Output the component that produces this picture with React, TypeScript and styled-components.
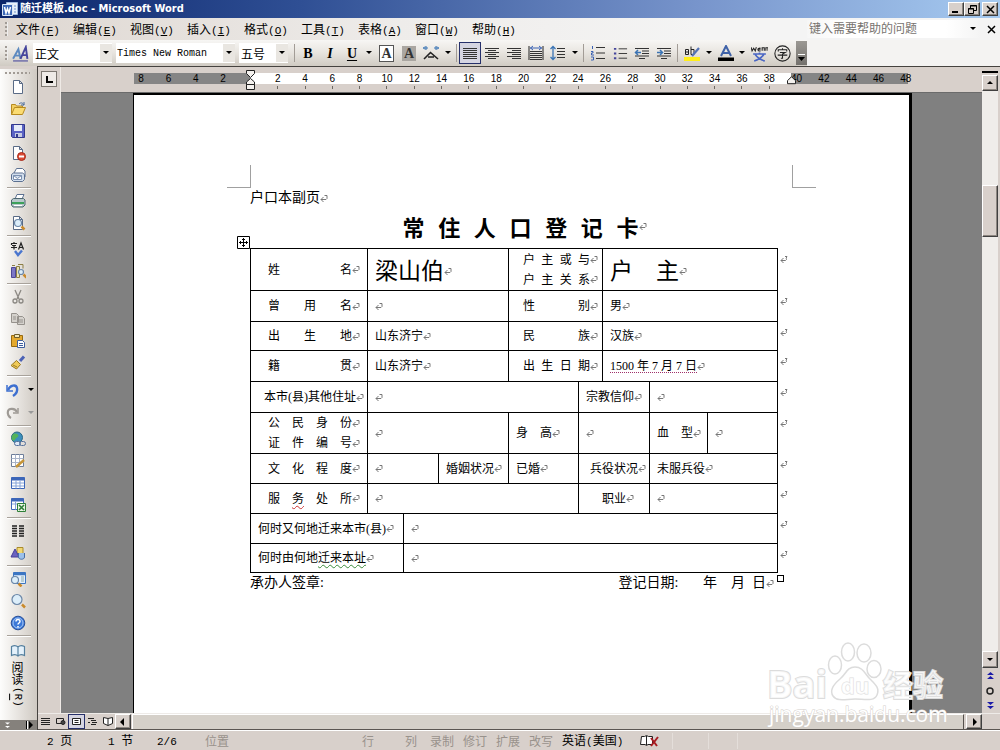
import React from "react";
import styled, { createGlobalStyle, css } from "styled-components";

const cjk = '"Noto Sans CJK SC", sans-serif';
const face = "#d8d0cb";

const GlobalStyle = createGlobalStyle`
  * { box-sizing: border-box; }
  html, body { margin: 0; padding: 0; }
  body { background: ${face}; color: #000; font: 12px/16px "Liberation Sans", ${cjk}; }
  button, select, input { font: inherit; color: inherit; margin: 0; padding: 0; border: 0; background: none; border-radius: 0; }
  svg { display: block; flex: none; }
`;

/* ---------- window frame ---------- */

const Window = styled.div`
  display: flex;
  flex-direction: column;
  height: 100vh;
  overflow: hidden;
  position: relative;
`;

const TitleBar = styled.header`
  display: flex;
  align-items: center;
  height: 18px;
  padding: 0 2px;
  gap: 2px;
  color: #fff;
  background: linear-gradient(to right, #0a246a, #2f4f94 30%, #7895cc 70%, #a6caf0);
`;

const Title = styled.h1`
  flex: 1;
  margin: 0;
  font: bold 11px/16px "DejaVu Sans Condensed", ${cjk};
`;

const Raised = styled.button<{ $w?: number; $h?: number; $flush?: boolean }>`
  display: flex;
  align-items: center;
  justify-content: center;
  flex: none;
  width: ${(p) => p.$w ?? 16}px;
  height: ${(p) => p.$h ?? 14}px;
  margin-right: ${(p) => (p.$flush ? -2 : 0)}px;
  color: #000;
  background: ${face};
  border: 1px solid;
  border-color: #fff #404040 #404040 #fff;
  box-shadow: inset -1px -1px 0 #8c8680;
`;

const MenuBar = styled.nav`
  display: flex;
  align-items: center;
  height: 22px;
  padding: 0 4px 0 5px;
  background: linear-gradient(to right, #ded7d1, #eeecea 40%, #f4f4f4 70%);
`;

const Grip = styled.span`
  width: 3px;
  height: 14px;
  flex: none;
  background: repeating-linear-gradient(to bottom, #a19b95 0 2px, transparent 2px 4px);
  border-right: 1px solid #eee;
`;

const MenuItem = styled.button`
  width: 57px;
  text-align: left;
  white-space: nowrap;
  font-family: ${cjk};
`;

const Menus = styled.div`
  display: flex;
  flex: 1;
  padding-left: 8px;
`;

const Half = styled.span`
  font: 11px/14px "Liberation Mono", monospace;
  u { text-underline-offset: 1px; }
`;

const HelpBox = styled.label`
  display: flex;
  align-items: center;
  width: 174px;
  height: 18px;
  padding-right: 2px;
  background: linear-gradient(to right, #f6f6f6, #fff 20%, #fff 80%, #f4f4f4);
  input { width: 162px; padding-left: 2px; outline: 0; }
  input::placeholder { color: #77736f; opacity: 1; }
`;

const CloseDoc = styled.button`
  width: 15px;
  display: flex;
  justify-content: flex-end;
`;

/* ---------- formatting toolbar ---------- */

const ToolRow = styled.div`
  display: flex;
  height: 26px;
  background: #f4f3f2;
`;

const Toolbar = styled.div`
  display: flex;
  align-items: center;
  padding-left: 5px;
  background: linear-gradient(to bottom, #f7f6f4, #e9e6e1 45%, #d0cbc3);
`;

const Combo = styled.label<{ $w: number; $mono?: boolean }>`
  display: flex;
  align-items: center;
  width: ${(p) => p.$w}px;
  height: 20px;
  margin-right: 4px;
  background: #fff;
  select {
    flex: 1;
    min-width: 0;
    padding-left: ${(p) => (p.$mono ? 1 : 2)}px;
    appearance: none;
    outline: 0;
    font: ${(p) => (p.$mono ? '10px "Liberation Mono", monospace' : "12px " + cjk)};
  }
`;

const ComboArrow = styled.span`
  display: flex;
  align-items: center;
  justify-content: center;
  width: 12px;
  height: 18px;
  background: #e9e6e1;
`;

const Tool = styled.button<{ $w?: number; $active?: boolean }>`
  display: flex;
  align-items: center;
  justify-content: center;
  width: ${(p) => p.$w ?? 22}px;
  height: 22px;
  ${(p) => p.$active && css`border: 1px solid #26306b; background: #d5d5e2;`}
`;

const VRule = styled.span`
  width: 1px;
  height: 18px;
  margin: 0 2px;
  background: #a29c96;
`;

const Letter = styled.span<{ $kind: "b" | "i" | "u" | "box" | "shade" }>`
  font: bold 14px/15px "Liberation Serif", serif;
  ${(p) => p.$kind === "i" && css`font-style: italic;`}
  ${(p) => p.$kind === "u" && css`text-decoration: underline; text-underline-offset: 2px;`}
  ${(p) => p.$kind === "box" && css`width: 15px; text-align: center; color: #333; border: 1px solid #555; background: #fff;`}
  ${(p) => p.$kind === "shade" && css`width: 14px; text-align: center; color: #333; background: #aaa6a1;`}
`;

const EndCap = styled.button`
  display: flex;
  align-items: flex-end;
  justify-content: center;
  width: 11px;
  height: 24px;
  margin-left: 3px;
  padding-bottom: 3px;
  background: linear-gradient(to bottom, #9b9893, #74716d);
`;

/* ---------- work area ---------- */

const Work = styled.div`
  display: flex;
  flex: 1;
  min-height: 0;
`;

const SideBar = styled.aside`
  display: flex;
  flex-direction: column;
  width: 37px;
  flex: none;
  margin-top: 3px;
  background: linear-gradient(to right, #fdfdfc, #f0eeeb 30%, #cfc9c2);
`;

const SideGrip = styled.span`
  height: 2px;
  margin: 3px 7px 2px 5px;
  background: repeating-linear-gradient(to right, #a19b95 0 2px, transparent 2px 4px);
`;

const SideTool = styled.button<{ $h?: number; $menu?: boolean }>`
  display: flex;
  align-items: center;
  gap: 6px;
  height: ${(p) => p.$h ?? 22}px;
  padding-left: ${(p) => (p.$menu ? 5 : 10)}px;
  flex: none;
`;

const HRule = styled.span`
  height: 2px;
  margin: 1px 6px 1px 7px;
  flex: none;
  background: #a8a29b;
  border-bottom: 1px solid #fff;
`;

const ReadTool = styled.button`
  display: flex;
  flex-direction: column;
  align-items: center;
  gap: 2px;
  padding: 5px 2px 0 0;
  line-height: 12px;
  font-family: ${cjk};
`;

const Upright = styled.span`
  writing-mode: vertical-rl;
  text-orientation: mixed;
  line-height: 14px;
`;

const SideCap = styled.button`
  display: flex;
  align-items: center;
  justify-content: space-between;
  height: 10px;
  margin-top: auto;
  padding: 0 3px 0 5px;
  background: #85817c;
`;

const Editor = styled.main`
  display: flex;
  flex-direction: column;
  flex: 1;
  min-width: 0;
  border-top: 1px solid #45423f;
  border-left: 1px solid #45423f;
  background: ${face};
`;

const EditorTop = styled.div`
  display: flex;
  flex: 1;
  min-height: 0;
`;

const LeftGutter = styled.div`
  width: 23px;
  flex: none;
  padding: 4px 0 0 3px;
  border-right: 1px solid #efeae6;
`;

const TabStop = styled.button`
  display: flex;
  align-items: center;
  justify-content: center;
  width: 16px;
  height: 16px;
  border: 1px solid #7d7872;
  background: #eeeae6;
`;

const Canvas = styled.div`
  display: flex;
  flex-direction: column;
  flex: 1;
  min-width: 0;
`;

const RulerRow = styled.div`
  display: flex;
  justify-content: center;
  height: 25px;
  padding: 6px 0 0 4px;
  overflow: hidden;
`;

const Ruler = styled.div`
  position: relative;
  display: grid;
  grid-template-columns: repeat(29, 1fr);
  flex: none;
  width: 792px;
  height: 11px;
  font: 10px/11px "Liberation Sans", sans-serif;
  background: linear-gradient(to right, transparent 6px, #858585 6px 122px, #fff 122px 663px, #858585 663px 780px, transparent 780px);
`;

const RulerMark = styled.span<{ $tick: boolean }>`
  display: flex;
  flex-direction: column;
  align-items: center;
  &::after {
    content: "";
    width: 1px;
    height: 3px;
    margin-top: 2px;
    flex: none;
    background: ${(p) => (p.$tick ? "#6d6862" : "transparent")};
  }
`;

const Indent = styled.svg<{ $x: number; $y: number }>`
  position: absolute;
  left: ${(p) => p.$x}px;
  top: ${(p) => p.$y}px;
`;

const Desk = styled.div`
  flex: 1;
  min-height: 0;
  padding-left: 2px;
  overflow: hidden;
  background: #808080;
  border-top: 1px solid #6b6b6b;
`;

const Paper = styled.article`
  width: 779px;
  min-height: 100%;
  margin: 0 auto;
  padding: 70px 116px 120px 116px;
  background: #fff;
  border: solid #000;
  border-width: 2px 3px 0 1px;
  font: 14px/20px "Liberation Serif", ${cjk};
`;

const Corners = styled.div`
  display: flex;
  justify-content: space-between;
  height: 23px;
  margin: 0 -23px;
`;

const Corner = styled.span<{ $side: "left" | "right" }>`
  width: 24px;
  border-bottom: 1px solid #a0a0a0;
  border-${(p) => (p.$side === "left" ? "right" : "left")}: 1px solid #a0a0a0;
`;

const Line = styled.p`
  display: flex;
  align-items: center;
  margin: 0;
`;

const Heading = styled.h2`
  display: flex;
  align-items: center;
  justify-content: center;
  height: 40px;
  margin: 0;
  padding: 0 0 4px 6px;
  font: bold 22px/30px ${cjk};
`;

const Spread = styled.span<{ $w: number }>`
  display: inline-block;
  width: ${(p) => p.$w}px;
  text-align: justify;
  text-align-last: justify;
`;

const SpreadParts = styled.span`
  display: flex;
  justify-content: space-between;
`;

const TableWrap = styled.div`
  position: relative;
`;

const Handle = styled.svg`
  position: absolute;
  left: -13px;
  top: -12px;
`;

const Resize = styled.span`
  position: absolute;
  left: 527px;
  bottom: -9px;
  width: 7px;
  height: 7px;
  border: 1px solid #000;
`;

const Card = styled.table`
  width: 540px;
  table-layout: fixed;
  border-collapse: collapse;
  font-size: 12px;
  line-height: 20px;
`;

const Row = styled.tr<{ $h: number }>`
  height: ${(p) => p.$h}px;
`;

const Cell = styled.td<{ $pad?: number; $big?: boolean }>`
  padding: 0 0 0 ${(p) => p.$pad ?? 7}px;
  border: 1px solid #000;
  white-space: nowrap;
  vertical-align: middle;
  ${(p) => p.$big && css`padding-top: 4px; font-size: 23px; line-height: 30px;`}
`;

const EndCell = styled.td`
  padding: 6px 0 0 2px;
  border: 0;
  vertical-align: top;
`;

const Para = styled.span`
  display: flex;
  align-items: center;
`;

const Flag = styled.span<{ $kind: "spell" | "grammar" | "tag" }>`
  text-decoration: underline;
  text-underline-offset: 2px;
  text-decoration-thickness: 1px;
  text-decoration-style: ${(p) => (p.$kind === "tag" ? "dotted" : "wavy")};
  text-decoration-color: ${(p) => ({ spell: "#c33", grammar: "#3a8a3a", tag: "#a0306a" })[p.$kind]};
`;

const Sign = styled.div`
  display: flex;
  justify-content: space-between;
  width: 524px;
`;

const DateParts = styled.span`
  display: flex;
  align-items: center;
  white-space: pre;
`;

/* ---------- scroll bars and status ---------- */

const VScroll = styled.div`
  display: flex;
  flex-direction: column;
  align-items: center;
  width: 18px;
  flex: none;
  padding: 4px 2px 0 0;
`;

const Splitter = styled.span`
  width: 16px;
  height: 3px;
  margin-bottom: 1px;
  border-top: 2px solid #000;
`;

const VTrack = styled.div`
  flex: 1;
  width: 16px;
  padding-top: 94px;
  background: #efedea;
`;

const VThumb = styled.div`
  height: 52px;
  background: ${face};
  border: 1px solid;
  border-color: #fff #404040 #404040 #fff;
  box-shadow: inset -1px -1px 0 #8c8680;
`;

const Browse = styled.button`
  display: flex;
  align-items: center;
  justify-content: center;
  width: 16px;
  height: 15px;
`;

const BottomRow = styled.div`
  display: flex;
  align-items: center;
  height: 17px;
  padding-right: 18px;
  border-bottom: 1px solid #5b5652;
  border-top: 1px solid #eeebe8;
`;

const View = styled.button<{ $active?: boolean }>`
  display: flex;
  align-items: center;
  justify-content: center;
  width: ${(p) => (p.$active ? 17 : 15)}px;
  height: 15px;
  ${(p) => p.$active && css`border: 1px solid #26306b; background: #d5d5e2;`}
`;

const HThumb = styled.div`
  flex: 1;
  height: 15px;
  margin: 0 2px 0 1px;
  background: #d5d0c9;
  border-left: 1px solid #fff;
  border-top: 1px solid #fff;
  border-right: 1px solid #55504c;
`;

const Status = styled.footer`
  display: flex;
  align-items: center;
  height: 20px;
  border-top: 1px solid #fff;
  white-space: nowrap;
  font-family: ${cjk};
`;

const Field = styled.span<{ $w: number; $off?: boolean; $boxed?: boolean }>`
  width: ${(p) => p.$w}px;
  flex: none;
  color: ${(p) => (p.$off ? "#98928c" : "#000")};
  ${(p) => p.$boxed && css`height: 16px; border-left: 1px solid #e4deda;`}
`;

const Digits = styled.span`
  font: 11px/16px "Liberation Mono", monospace;
`;

/* ---------- watermark ---------- */

const Watermark = styled.div`
  position: absolute;
  right: 52px;
  bottom: 19px;
  width: 181px;
  height: 90px;
  pointer-events: none;
`;

const MarkText = styled.text<{ $size: number; $thin?: boolean }>`
  font: bold ${(p) => p.$size}px "Open Sans", ${cjk};
  fill: rgba(255, 255, 255, 0.75);
  stroke: #dcdcdc;
  stroke-width: ${(p) => (p.$thin ? 1 : 2)}px;
  paint-order: stroke;
`;

const Address = styled.text`
  font: 21px "Open Sans", sans-serif;
  fill: #fff;
  stroke: #d4cfcb;
  stroke-width: 1px;
  paint-order: stroke;
`;

/* ---------- drawings ---------- */

const Arrow = ({ dir = "down", color = "#000" }: { dir?: "down" | "up" | "left" | "right"; color?: string }) => {
  const d = { down: "M1 2h6L4 5z", up: "M1 5h6L4 2z", left: "M5 0v8L1 4z", right: "M3 0v8l4-4z" }[dir];
  return <svg width="8" height="8" viewBox="0 0 8 8" aria-hidden="true"><path d={d} fill={color} /></svg>;
};

const Mark = ({ end = false }: { end?: boolean }) => (
  <svg width="8" height="9" viewBox="0 0 8 9" fill="none" stroke="#777" strokeWidth="1" aria-hidden="true">
    <path d={end ? "M5 1.5h2L6 3.5M6.5 3.5v1l-1 1H1M3.5 3L1 5.5 3.5 8" : "M4.500 1.500h2.500v3l-1 1H1M3.500 3L1 5.500 3.500 8"} />
  </svg>
);

const Pic = ({ children, size = 16 }: { children: React.ReactNode; size?: number }) => (
  <svg width={size} height={size} viewBox="0 0 16 16" fill="none" aria-hidden="true">{children}</svg>
);

const pageShape = <path d="M3.5 1.500h6l3 3v10h-9z M9.500 1.500v3h3" fill="#fff" stroke="#596b86" />;
const lens = (x: number, y: number, r: number) => (
  <>
    <path d={`M${x + r} ${y + r}l3 3`} stroke="#c98a2c" strokeWidth="2.500" />
    <circle cx={x} cy={y} r={r} fill="#dceefa" stroke="#6b87a8" strokeWidth="1.200" />
  </>
);

const icons: Record<string, React.ReactNode> = {
  new: pageShape,
  open: <><path d="M1.500 13.500v-10h4l1 1.500h6v2" fill="#f3cf62" stroke="#b68a20" /><path d="M1.500 13.500l3-7h11l-3 7z" fill="#fbdc72" stroke="#b68a20" /><path d="M9 3c2-2 4-1 5 1m0-3v3h-3" stroke="#476a9a" /></>,
  save: <><path d="M1.500 1.500h13v13h-12l-1-1z" fill="#5a62c4" stroke="#33398c" /><path d="M4 2h8v6H4z" fill="#e6ecf8" /><path d="M5 10h7v4H5z" fill="#c6cbe2" /><path d="M6 11h2v3H6z" fill="#33398c" /></>,
  permission: <>{pageShape}<circle cx="11.500" cy="11.500" r="4" fill="#dc4b35" stroke="#a52a1a" /><path d="M9 11.500h5" stroke="#fff" strokeWidth="2" /></>,
  mail: <><path d="M4 6l2.500-4.500h6L15 4v6" fill="#fff" stroke="#5c7191" /><path d="M1.500 7.500l2-1.500h9l2 1.500v5l-2 2h-9l-2-2z" fill="#d3dfee" stroke="#5c7191" /><path d="M3.500 8.500h8v4h-8zM3.500 8.500l4 3 4-3" fill="#fff" stroke="#7b90b0" /></>,
  print: <><path d="M5 6l2-4.500h7L12 6z" fill="#fff" stroke="#5c7191" /><path d="M1.500 7l2-1.500h10l1.500 1.500v5l-2 2h-10l-1.500-2z" fill="#b8c8cc" stroke="#4d6670" /><path d="M2 10h12" stroke="#3ca05a" strokeWidth="2" /><path d="M4 12.500h8" stroke="#fff" /></>,
  preview: <>{pageShape}{lens(8, 8, 3.5)}</>,
  spell: <><path d="M1 2.500h6M4 1v1.500M1.500 4v-1.500M2 4.500h4M4 4.500v4M1 6.500h6M8.500 8.500L11 2l2.500 6.500M9 6.500h4.500" stroke="#222" strokeWidth="1.200" /><path d="M5 10l3 4 4-4.500" stroke="#4a76cf" strokeWidth="2.400" /></>,
  research: <><path d="M1.500 4.500h4v10h-4z" fill="#7c77c6" stroke="#4d4896" /><path d="M6.500 3.500h3v11h-3z" fill="#e9e2b8" stroke="#8c7f45" /><path d="M2 2.500h3M8 1.500h5v4" stroke="#8c7f45" />{lens(11, 9, 2.5)}</>,
  cut: <><path d="M5 1l4 9M11 1L7 10" stroke="#8b8883" strokeWidth="1.300" /><circle cx="5" cy="12" r="2" stroke="#8b8883" strokeWidth="1.300" /><circle cx="11" cy="12" r="2" stroke="#8b8883" strokeWidth="1.300" /></>,
  copy: <><path d="M1.500 2.500h5l2 2v7h-7z M7.500 5.500h5l2 2v6h-7z" fill="#d4d1cc" stroke="#96928d" /><path d="M3 6h3M3 8h3M9 9h4M9 11h4" stroke="#96928d" /></>,
  paste: <><path d="M1.500 2.500h11v11h-11z" fill="#e4a92e" stroke="#976a12" /><path d="M4.500 1.500h5v3h-5z" fill="#f4e7b5" stroke="#6d5c2b" /><path d="M7.500 7.500h5l2 2v5h-7z" fill="#fff" stroke="#3f5f9e" /><path d="M9 10.500h4M9 12.500h4" stroke="#3f5f9e" /></>,
  brush: <><path d="M10 6l4-4.500" stroke="#4c62b5" strokeWidth="3" /><path d="M6.500 5.500l4 4-4 4.500-5.500-3.500z" fill="#f0cb58" stroke="#9b7a22" /><path d="M3 10l4 2" stroke="#9b7a22" /></>,
  undo: <><path d="M2 3v6h6" stroke="#3d6fd0" strokeWidth="1.500" /><path d="M3 8c2-5 8-6 9-2s-1 6-4 8" stroke="#3d6fd0" strokeWidth="2.400" /></>,
  redo: <><path d="M13 3v5H8" stroke="#9e9a95" strokeWidth="1.500" /><path d="M12 7c-2-4-8-4-9-1s1 6 3 7" stroke="#9e9a95" strokeWidth="2.200" /></>,
  link: <><circle cx="7" cy="6.500" r="5.500" fill="#3d8fbd" stroke="#2a6684" /><path d="M4 2.500c4 0 6 2 3 4s-2 4-4 3-2-5 1-7z" fill="#53b35b" /><rect x="4.500" y="10.500" width="6" height="4" rx="2" fill="#dfe8f5" stroke="#54709c" /><rect x="9.500" y="10.500" width="6" height="4" rx="2" stroke="#54709c" /></>,
  borders: <><path d="M1.500 1.500h12v12h-12z" fill="#fff" stroke="#6d7d99" /><path d="M1.500 5.500h12M1.500 9.500h12M5.500 1.500v12M9.500 1.500v12" stroke="#a9b4c9" /><path d="M6 14l8-7" stroke="#c69538" strokeWidth="2.500" /></>,
  table: <><path d="M1.500 2.500h13v11h-13z" fill="#fff" stroke="#3c66b8" /><path d="M1.500 4h13" stroke="#3c66b8" strokeWidth="3" /><path d="M2 8h12M2 11h12M6 5.500v8M10 5.500v8" stroke="#86a4d8" /></>,
  excel: <><path d="M1.500 1.500h12v11h-12z" fill="#fff" stroke="#3c66b8" /><path d="M1.500 3h12" stroke="#3c66b8" strokeWidth="3" /><path d="M2 7h6M5.500 4.500v8" stroke="#86a4d8" /><path d="M7.500 6.500h8v8h-8z" fill="#e9f5e4" stroke="#2f7f38" /><path d="M9 8l5 5M14 8l-5 5" stroke="#2f7f38" strokeWidth="1.600" /></>,
  columns: <path d="M2 3h5M2 5.500h5M2 8h5M2 10.500h5M2 13h5M9 3h5M9 5.500h5M9 8h5M9 10.500h5M9 13h5" stroke="#222" strokeWidth="1.400" />,
  drawing: <><path d="M7 2.500h6v6H7z" fill="#f2d873" stroke="#a98b2c" /><path d="M1 12L5 4l4 8z" fill="#6a63c0" stroke="#463f98" /><path d="M8.500 8v4c0 3 6 3 6 0V8" fill="#9cc0ea" stroke="#466da6" /></>,
  map: <><path d="M3.500 1.500h12v11h-12z" fill="#e3effc" stroke="#3c76c2" /><path d="M3.500 3h12" stroke="#3c76c2" strokeWidth="2.500" /><path d="M11 6h3M11 8h3M11 10h3" stroke="#8aa" />{lens(5, 9, 3.5)}</>,
  zoom: lens(7, 6.5, 5),
  help: <><circle cx="8" cy="8" r="6.800" fill="#3b78d8" stroke="#2a4f96" /><circle cx="8" cy="8" r="5" stroke="#a9c9f5" /><path d="M6 6.500c0-3 4.200-2.500 4 0C10 8 8 8 8 9.500M8 11v1.500" stroke="#fff" strokeWidth="1.500" /></>,
  read: <path d="M1.500 3.500c2-1 5-1 6.500.5 1.500-1.500 4.500-1.500 6.500-.5v9c-2-1-5-1-6.500.5-1.500-1.500-4.500-1.500-6.500-.5zM8 4v9" fill="#e4f1fb" stroke="#55809f" strokeWidth="1.200" />,
  style: <><path d="M1 13L6 4l2 9M3 10h4.500" stroke="#5d8ac0" strokeWidth="1.800" /><path d="M8 13L13 2l1.500 11M9.500 9.500h5" stroke="#45459c" strokeWidth="1.800" /><path d="M1 15h14" stroke="#45459c" /></>,
  scale: <><path d="M1 14L7.500 7.500 15 14M5 12h6" stroke="#222" strokeWidth="1.600" /><path d="M0 3h5M3 1v4M2 1.500L.5 3 2 4.500M16 3h-5M13 1v4M14 1.500L15.500 3 14 4.500" stroke="#3b74b4" /></>,
  justify: <path d="M1 3.500h14M1 5.500h14M1 7.500h14M1 9.500h14M1 11.500h14M1 13.500h14" stroke="#333" />,
  center: <path d="M1 3.500h14M4 5.500h8M1 7.500h14M4 9.500h8M1 11.500h14M4 13.500h8" stroke="#333" />,
  right: <path d="M1 3.500h14M6 5.500h9M1 7.500h14M6 9.500h9M1 11.500h14M6 13.500h9" stroke="#333" />,
  distribute: <><path d="M1 1v14M15 1v14" stroke="#222" /><path d="M2 3h12M5 1L2.500 3 5 5M11 1l2.500 2L11 5" stroke="#3b62b4" /><path d="M2 6.500h12M2 8.500h12M2 10.500h12M2 12.500h12M2 14.500h12" stroke="#333" /></>,
  spacing: <><path d="M3 1.500v13M.5 4L3 1.500 5.500 4M.5 12L3 14.500 5.500 12" stroke="#3b74b4" strokeWidth="1.300" /><path d="M7 3.500h8M7 6.500h8M7 9.500h8M7 12.500h8" stroke="#333" /></>,
  numbers: <><path d="M2.500 1v3M1 6.500h2v1.500H1.500V10H4M1 12h2.500v3H1" stroke="#3b62b4" /><path d="M6 2.500h9M6 8h9M6 13.500h9" stroke="#333" /></>,
  bullets: <><path d="M1 2h2.500v2H1zM1 7h2.500v2H1zM1 12h2.500v2H1z" fill="#45459c" /><path d="M6 3h9M6 8h9M6 13h9" stroke="#333" /></>,
  outdent: <><path d="M1 3.500h14M8 6h7M8 8.500h7M1 11h14M5 13.500h6" stroke="#333" strokeWidth="1.200" /><path d="M7 7.500H1.500M4 5L1.500 7.500 4 10" stroke="#3b74b4" strokeWidth="1.500" /></>,
  indent: <><path d="M1 3.500h14M8 6h7M8 8.500h7M1 11h14M5 13.500h6" stroke="#333" strokeWidth="1.200" /><path d="M1 7.500h5.500M4 5l2.500 2.500L4 10" stroke="#3b74b4" strokeWidth="1.500" /></>,
  highlight: <><path d="M0 12h16v4H0z" fill="#ffee1a" /><path d="M1.500 4.500h3v5h-3zM4.500 7H2M7 1.500v8h3v-5H7" stroke="#222" /><path d="M8 11l7-8" stroke="#5674b4" strokeWidth="2.200" /></>,
  color: <><path d="M3 11L8 1l5 10M5 8h6" stroke="#3f62a8" strokeWidth="2" /><path d="M0 12.500h16V16H0z" fill="#000" /></>,
  phonetic: <><path d="M0 2l1 3.500L2.500 3 4 5.500 5 2M6 4h3M9 5.500c-3 1-3.500-3 0-2.500M10.500 5.500v-3h2v3M14 5.500v-3h2v3" stroke="#222" /><path d="M2 8.500h12M8 7v1.500M4 9c2 3 5 5 9 6M12 9c-2 3-5 5-9 6" stroke="#4a66c4" strokeWidth="1.500" /></>,
};

const Icon = ({ name, size }: { name: string; size?: number }) => <Pic size={size}>{icons[name]}</Pic>;

/* ---------- data ---------- */

const menus = [["文件", "F"], ["编辑", "E"], ["视图", "V"], ["插入", "I"], ["格式", "O"], ["工具", "T"], ["表格", "A"], ["窗口", "W"], ["帮助", "H"]];

const sideGroups = [
  ["new", "open", "save", "permission", "mail"],
  ["print", "preview"],
  ["spell", "research"],
  ["cut", "copy", "paste", "brush"],
  ["undo", "redo"],
  ["link", "borders", "table", "excel"],
  ["columns", "drawing"],
  ["map", "zoom", "help"],
];

const rulerValues = Array.from({ length: 29 }, (_, i) => i * 2 - 8);
const columnWidths = [117, 36, 35, 70, 70, 24, 47, 58, 70, 13];

type CellData = { span?: number; pad?: number; spread?: number; big?: boolean; lines: React.ReactNode[] };

const cell = (span: number, text: React.ReactNode = "", pad?: number, big?: boolean): CellData => ({ span, pad, big, lines: [text] });
const label = (...lines: React.ReactNode[]): CellData => ({ pad: 17, spread: 84, lines });
const label2 = (...lines: React.ReactNode[]): CellData => ({ span: 2, pad: 14, spread: 67, lines });

const rows: { h: number; cells: CellData[] }[] = [
  { h: 42, cells: [label("姓名"), cell(3, "梁山伯", 7, true), label2("户主或与", "户主关系"), cell(3, "户　主", 7, true)] },
  { h: 31, cells: [label("曾用名"), cell(3), label2("性别"), cell(3, "男")] },
  { h: 29, cells: [label("出生地"), cell(3, "山东济宁"), label2("民族"), cell(3, "汉族")] },
  { h: 31, cells: [label("籍贯"), cell(3, "山东济宁"), label2("出生日期"), cell(3, <Flag $kind="tag">1500 年 7 月 7 日</Flag>)] },
  { h: 31, cells: [cell(1, "本市(县)其他住址", 13), cell(4), cell(2, "宗教信仰"), cell(2)] },
  { h: 41, cells: [label("公民身份", "证件编号"), cell(3), cell(1, "身　高"), cell(2), cell(1, "血　型"), cell(1)] },
  { h: 30, cells: [label("文化程度"), cell(2), cell(1, "婚姻状况"), cell(1, "已婚"), cell(2, "兵役状况", 11), cell(2, "未服兵役")] },
  { h: 30, cells: [label(<SpreadParts><span>服</span><Flag $kind="spell">务</Flag><span>处</span><span>所</span></SpreadParts>), cell(4), cell(2, "职业", 23), cell(2)] },
  { h: 30, cells: [cell(2, "何时又何地迁来本市(县)"), cell(7)] },
  { h: 29, cells: [cell(2, <>何时由何地<Flag $kind="grammar">迁来本址</Flag></>), cell(7)] },
];

/* ---------- sections ---------- */

const SideTools = () => (
  <SideBar>
    <SideGrip />
    {sideGroups.map((group, i) => (
      <React.Fragment key={i}>
        {group.map((name) => {
          const history = name === "undo" || name === "redo";
          return (
            <SideTool key={name} aria-label={name} $menu={history} $h={history ? 23 : 22}>
              <Icon name={name} />
              {history && <Arrow color={name === "undo" ? "#000" : "#999"} />}
            </SideTool>
          );
        })}
        <HRule />
      </React.Fragment>
    ))}
    <ReadTool>
      <Icon name="read" />
      <span>阅<br />读</span>
      <Upright><Half>(<u>R</u>)</Half></Upright>
    </ReadTool>
    <SideCap aria-label="toolbar options">
      <svg width="5" height="8" viewBox="0 0 5 8"><path d="M0 1.500h5L2.500 3.500zM0 5h5L2.500 7z" fill="#fff" /></svg>
      <svg width="9" height="8" viewBox="0 0 9 8"><path d="M1 0h1v8H1zM4 0v8l4-4z" fill="#000" /><path d="M2 0h1v8H2z" fill="#fff" /></svg>
    </SideCap>
  </SideBar>
);

const FormatBar = () => (
  <ToolRow>
    <Toolbar>
      <Grip />
      <Tool aria-label="样式" $w={25}><Icon name="style" size={17} /></Tool>
      <Combo $w={79}><select aria-label="样式"><option>正文</option></select><ComboArrow><Arrow /></ComboArrow></Combo>
      <Combo $w={119} $mono><select aria-label="字体"><option>Times New Roman</option></select><ComboArrow><Arrow /></ComboArrow></Combo>
      <Combo $w={49}><select aria-label="字号"><option>五号</option></select><ComboArrow><Arrow /></ComboArrow></Combo>
      <VRule />
      <Tool aria-label="加粗"><Letter $kind="b">B</Letter></Tool>
      <Tool aria-label="倾斜"><Letter $kind="i">I</Letter></Tool>
      <Tool aria-label="下划线"><Letter $kind="u">U</Letter></Tool>
      <Tool aria-label="下划线类型" $w={12}><Arrow /></Tool>
      <Tool aria-label="字符边框" $w={23}><Letter $kind="box">A</Letter></Tool>
      <Tool aria-label="字符底纹"><Letter $kind="shade">A</Letter></Tool>
      <Tool aria-label="字符缩放"><Icon name="scale" /></Tool>
      <Tool aria-label="缩放比例" $w={12}><Arrow /></Tool>
      <VRule />
      <Tool aria-label="两端对齐" $active><Icon name="justify" /></Tool>
      <Tool aria-label="居中"><Icon name="center" /></Tool>
      <Tool aria-label="右对齐"><Icon name="right" /></Tool>
      <Tool aria-label="分散对齐"><Icon name="distribute" /></Tool>
      <Tool aria-label="行距"><Icon name="spacing" /></Tool>
      <Tool aria-label="行距选项" $w={12}><Arrow /></Tool>
      <VRule />
      <Tool aria-label="编号" $w={23}><Icon name="numbers" /></Tool>
      <Tool aria-label="项目符号"><Icon name="bullets" size={15} /></Tool>
      <Tool aria-label="减少缩进量"><Icon name="outdent" /></Tool>
      <Tool aria-label="增加缩进量"><Icon name="indent" /></Tool>
      <VRule />
      <Tool aria-label="突出显示" $w={24}><Icon name="highlight" /></Tool>
      <Tool aria-label="突出显示颜色" $w={10}><Arrow /></Tool>
      <Tool aria-label="字体颜色" $w={23}><Icon name="color" /></Tool>
      <Tool aria-label="更多字体颜色" $w={10}><Arrow /></Tool>
      <Tool aria-label="拼音指南" $w={24}><Icon name="phonetic" size={17} /></Tool>
      <Tool aria-label="带圈字符">
        <Pic size={17}><circle cx="8" cy="8" r="7.200" stroke="#222" /><path d="M4 6V4.500h8V6M8 3v1.500M5.500 7h5L8 8.500v4H6.500M3.500 9.500h9" stroke="#222" /></Pic>
      </Tool>
      <EndCap aria-label="工具栏选项">
        <svg width="7" height="8" viewBox="0 0 7 8"><path d="M0 0h7v1H0z" fill="#fff" /><path d="M0 3h7L3.500 7z" fill="#000" /></svg>
      </EndCap>
    </Toolbar>
  </ToolRow>
);

const RegisterCard = () => (
  <TableWrap>
    <Handle width="13" height="13" viewBox="0 0 13 13" fill="none" stroke="#000">
      <path d="M.5.500h12v12H.5z" fill="#fff" />
      <path d="M6.500 2v9M2 6.500h9M5 3.500h3M5 9.500h3M3.500 5v3M9.500 5v3" />
    </Handle>
    <Card>
      <colgroup>{columnWidths.map((w, i) => <col key={i} width={w} />)}</colgroup>
      <tbody>
        {rows.map((row, r) => (
          <Row key={r} $h={row.h}>
            {row.cells.map((c, i) => (
              <Cell key={i} colSpan={c.span ?? 1} $pad={c.pad} $big={c.big}>
                {c.lines.map((line, k) => (
                  <Para key={k}>
                    {c.spread ? <Spread $w={c.spread}>{line}</Spread> : <span>{line}</span>}
                    <Mark />
                  </Para>
                ))}
              </Cell>
            ))}
            <EndCell><Mark end /></EndCell>
          </Row>
        ))}
      </tbody>
    </Card>
    <Resize />
  </TableWrap>
);

const Brand = () => (
  <Watermark>
    <svg width="181" height="90" viewBox="0 0 181 90" fill="none">
      <g fill="#fff" fillOpacity=".75" stroke="#dcdcdc" strokeWidth="1.500">
        <ellipse cx="68" cy="24" rx="6.500" ry="9" />
        <ellipse cx="81" cy="11" rx="6.500" ry="9" />
        <ellipse cx="97" cy="12" rx="7" ry="9" />
        <ellipse cx="107" cy="28" rx="7" ry="8.500" />
        <path d="M88 26c8 0 10 7 15 12s10 9 7 16-13 4-22 4-18 3-22-3 1-12 7-17 7-12 15-12z" />
      </g>
      <MarkText $size={38} x="0" y="57">Bai</MarkText>
      <MarkText $size={22} $thin x="74" y="53">du</MarkText>
      <MarkText $size={30} x="116" y="55">经验</MarkText>
      <Address x="2" y="81">jingyan.baidu.com</Address>
    </svg>
  </Watermark>
);

const App = () => (
  <Window>
    <GlobalStyle />
    <TitleBar>
      <Pic><path d="M4.500 1.500h11v12h-11z" fill="#e8f0fb" stroke="#9db7de" /><path d="M.5 3.500h10v11H.5z" fill="#3c68b8" stroke="#dbe7f7" /><path d="M2.500 6l1.500 6 1.500-4.500L7 12l1.500-6" stroke="#fff" strokeWidth="1.500" /><path d="M12 5h2M12 8h2M12 11h2" stroke="#6f93c9" /></Pic>
      <Title>随迁模板.doc - Microsoft Word</Title>
      <Raised aria-label="最小化" $flush><svg width="8" height="8"><path d="M0 6h6v2H0z" /></svg></Raised>
      <Raised aria-label="还原"><svg width="9" height="9" fill="none" stroke="#000"><path d="M2.500 3V.5h6v5H6M2 1h7M.5 3.500h5v5h-5zM0 4h6" /></svg></Raised>
      <Raised aria-label="关闭"><svg width="9" height="9" stroke="#000" strokeWidth="1.500"><path d="M1 1l7 7M8 1L1 8" /></svg></Raised>
    </TitleBar>

    <MenuBar>
      <Grip />
      <Menus>
        {menus.map(([name, key]) => (
          <MenuItem key={key}>{name}<Half>(<u>{key}</u>)</Half></MenuItem>
        ))}
      </Menus>
      <HelpBox><input aria-label="帮助" placeholder="键入需要帮助的问题" /><Arrow /></HelpBox>
      <CloseDoc aria-label="关闭文档"><svg width="9" height="9" stroke="#000" strokeWidth="1.500"><path d="M1 1l7 7M8 1L1 8" /></svg></CloseDoc>
    </MenuBar>

    <FormatBar />

    <Work>
      <SideTools />
      <Editor>
        <EditorTop>
          <LeftGutter>
            <TabStop aria-label="制表符"><svg width="7" height="7"><path d="M1 0v6h6" fill="none" stroke="#000" strokeWidth="2" /></svg></TabStop>
          </LeftGutter>
          <Canvas>
            <RulerRow>
              <Ruler>
                {rulerValues.map((v) => (
                  <RulerMark key={v} $tick={v > 0 && v < 40}>{v === 0 ? "\u00a0" : Math.abs(v)}</RulerMark>
                ))}
                <Indent $x={117} $y={-3} width="11" height="21" viewBox="0 0 11 21" fill="#f4f1ee" stroke="#222">
                  <path d="M1.500.500h8v3l-4 4-4-4zM5.500 8.500l4 3.500v2.500h-8V12zM1.500 14.500h8v5h-8z" />
                </Indent>
                <Indent $x={659} $y={3} width="9" height="9" viewBox="0 0 9 9" fill="#f4f1ee" stroke="#222">
                  <path d="M4.500.700l4 4v3h-8v-3z" />
                </Indent>
              </Ruler>
            </RulerRow>
            <Desk>
              <Paper>
                <Corners><Corner $side="left" /><Corner $side="right" /></Corners>
                <Line>户口本副页<Mark /></Line>
                <Heading><Spread $w={236}>常 住 人 口 登 记 卡</Spread><Mark /></Heading>
                <RegisterCard />
                <Sign>
                  <span>承办人签章:</span>
                  <DateParts>{"登记日期:       年    月  日"}<Mark /></DateParts>
                </Sign>
              </Paper>
            </Desk>
          </Canvas>
          <VScroll>
            <Splitter />
            <Raised aria-label="向上" $h={16}><Arrow dir="up" /></Raised>
            <VTrack><VThumb /></VTrack>
            <Raised aria-label="向下" $h={17}><Arrow /></Raised>
            <Browse aria-label="前一页"><svg width="7" height="8" fill="#1c1ca8"><path d="M3.500 0L7 3H0zM3.500 4L7 7H0z" /></svg></Browse>
            <Browse aria-label="选择浏览对象"><svg width="8" height="8"><circle cx="4" cy="4" r="3" fill="#d8d0cb" stroke="#222" strokeWidth="1.500" /></svg></Browse>
            <Browse aria-label="下一页"><svg width="7" height="8" fill="#1c1ca8"><path d="M0 0h7L3.500 3zM0 4h7L3.500 7z" /></svg></Browse>
          </VScroll>
        </EditorTop>
        <BottomRow>
          <View aria-label="普通视图"><svg width="9" height="9" stroke="#222"><path d="M0 1.500h9M0 3.500h9M0 5.500h9M0 7.500h9" /></svg></View>
          <View aria-label="Web 版式"><svg width="10" height="9" fill="none" stroke="#222"><path d="M.5 1.500h7v5h-7z" /><circle cx="7" cy="5.500" r="2" fill="#444" /></svg></View>
          <View aria-label="页面视图" $active><svg width="9" height="9" fill="#fff" stroke="#222"><path d="M.5 1.500h8v6h-8zM2.500 3.500h4M2.500 5.500h4" /></svg></View>
          <View aria-label="大纲视图"><svg width="9" height="9" stroke="#222"><path d="M0 1.500h6M3 3.500h5M0 5.500h2M4 5.500h5M3 7.500h5" /></svg></View>
          <View aria-label="阅读版式"><svg width="10" height="9" fill="#fff" stroke="#222"><path d="M.5.500l4.500 1 4.500-1v6L5 8.500.5 6.500zM5 1.500v7" /></svg></View>
          <Raised aria-label="向左" $h={15}><Arrow dir="left" /></Raised>
          <HThumb />
          <Raised aria-label="向右" $h={15}><Arrow dir="right" /></Raised>
        </BottomRow>
      </Editor>
    </Work>

    <Status>
      <Field $w={47} />
      <Field $w={61}><Digits>2 </Digits>页</Field>
      <Field $w={49}><Digits>1 </Digits>节</Field>
      <Field $w={48}><Digits>2/6</Digits></Field>
      <Field $w={157} $off>位置</Field>
      <Field $w={43} $off>行</Field>
      <Field $w={25} $off>列</Field>
      <Field $w={33} $off>录制</Field>
      <Field $w={33} $off>修订</Field>
      <Field $w={33} $off>扩展</Field>
      <Field $w={33} $off>改写</Field>
      <Field $w={78}>英语<Half>(</Half>美国<Half>)</Half></Field>
      <Field $w={32}>
        <svg width="20" height="14" fill="#fff" stroke="#222"><path d="M1.500 2.500h3l2-1 2 1h4v8H8l-1.500 1-1.500-1H.5zM6.500 2v9" /><path d="M11 4l6 8M18 3l-7 9" stroke="#a81c22" strokeWidth="2" /></svg>
      </Field>
      <Field $w={36} $boxed />
      <Field $w={29} $boxed />
      <Field $w={30} $boxed />
    </Status>
    <Brand />
  </Window>
);

export default App;
